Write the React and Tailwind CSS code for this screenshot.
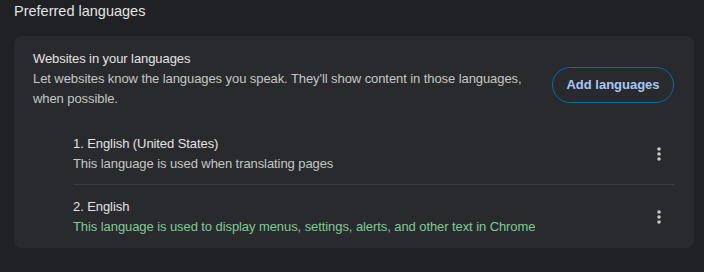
export default function App() {
  const font = { fontFamily: '"Liberation Sans", Arial, sans-serif' };
  const Dots = () => (
    <svg width="20" height="20" viewBox="0 0 20 20" className="block">
      <circle cx="10" cy="5" r="1.8" fill="#c4c7c5" />
      <circle cx="10" cy="10" r="1.8" fill="#c4c7c5" />
      <circle cx="10" cy="15" r="1.8" fill="#c4c7c5" />
    </svg>
  );
  return (
    <div className="w-[704px] h-[272px] bg-[#202124] px-[14px] pt-[1px]" style={font}>
      <div className="text-[14.5px] leading-[20px] text-[#e3e3e3]">Preferred languages</div>
      <div className="mt-[15px] w-[680px] rounded-[8px] bg-[#292a2d]">
        <div className="flex items-center pl-[19px] pr-[20px] pt-[13px]">
          <div className="flex-1 text-[13px] leading-[20px] tracking-[-0.08px]">
            <div className="text-[#e3e3e3]">Websites in your languages</div>
            <div className="text-[#c4c7c5] w-[500px]">
              Let websites know the languages you speak. They'll show content in those languages, when possible.
            </div>
          </div>
          <button className="mt-[12px] h-[36px] w-[122px] rounded-full border border-[#0b6e9c] text-[13px] font-bold text-[#a8c7fa]">
            Add languages
          </button>
        </div>
        <div className="ml-[59px] mr-[19px] mt-[14px]">
          <div className="flex items-center h-[61px]">
            <div className="flex-1 text-[13px] leading-[20px] tracking-[-0.08px]">
              <div className="text-[#e3e3e3]">1. English (United States)</div>
              <div className="text-[#c4c7c5]">This language is used when translating pages</div>
            </div>
            <div className="mr-[6px]"><Dots /></div>
          </div>
          <div className="flex items-center h-[64px] border-t border-[#3c3d40]">
            <div className="flex-1 text-[13px] leading-[20px] tracking-[-0.08px]">
              <div className="text-[#e3e3e3]">2. English</div>
              <div className="text-[#81c995]">This language is used to display menus, settings, alerts, and other text in Chrome</div>
            </div>
            <div className="mr-[6px]"><Dots /></div>
          </div>
        </div>
      </div>
    </div>
  );
}
